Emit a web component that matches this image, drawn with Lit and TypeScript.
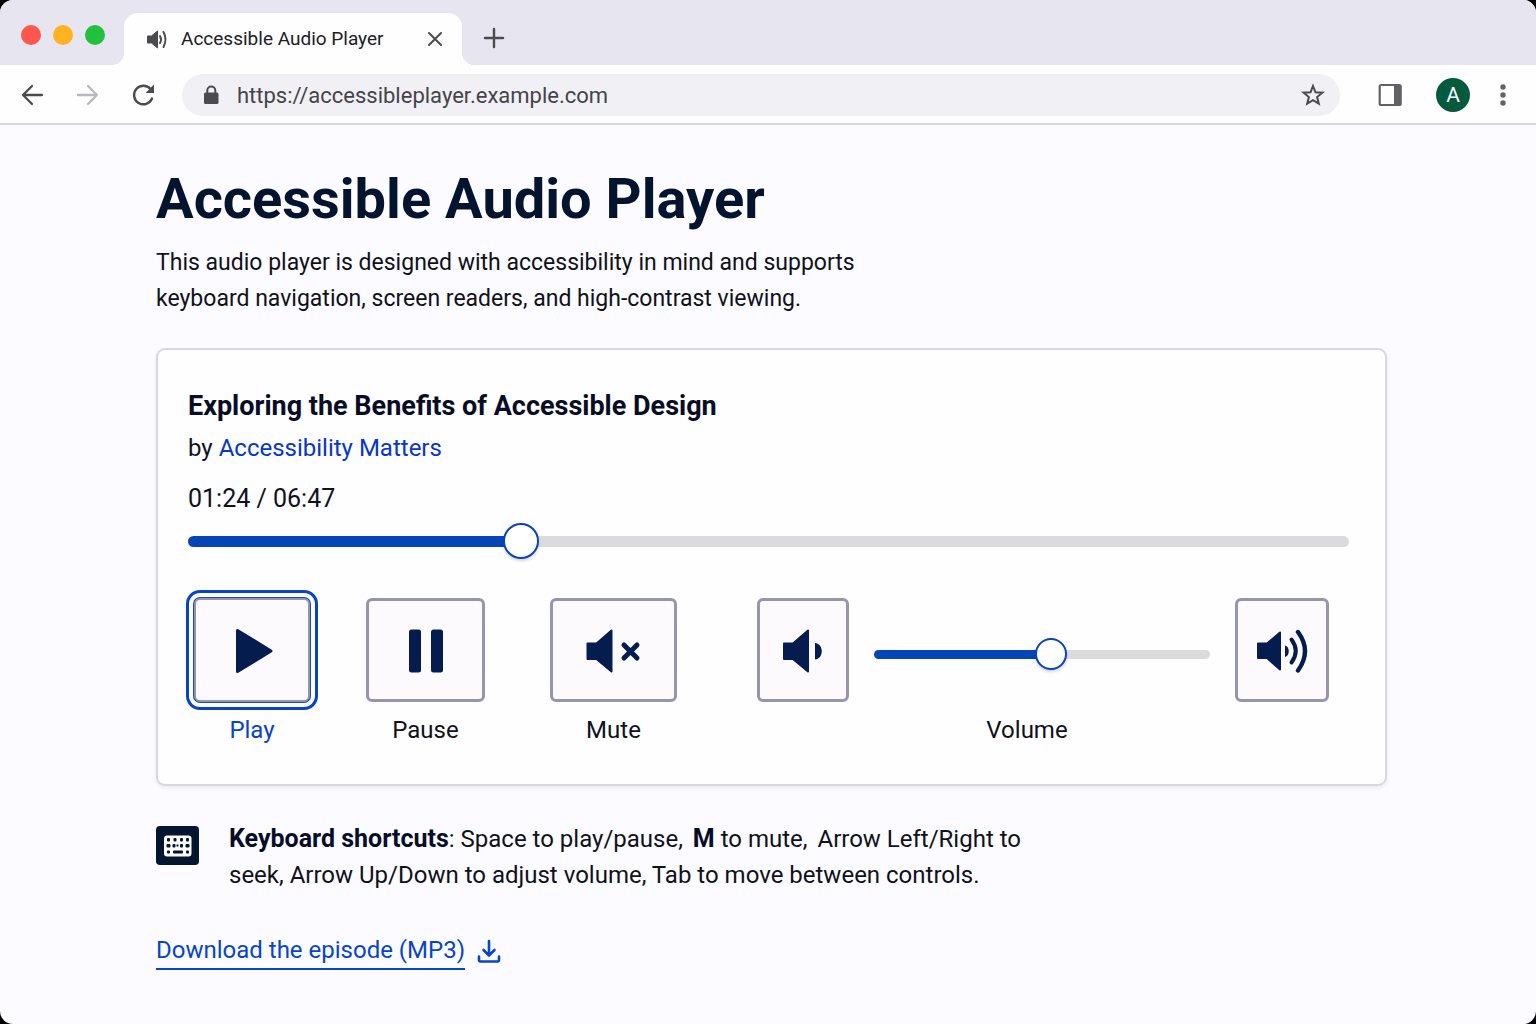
import { LitElement, html, css, svg } from "lit";
import { customElement, state } from "lit/decorators.js";

const speakerTab = svg`<path fill="currentColor" stroke="currentColor" stroke-linejoin="round" d="M1.500 8h4l6-5v17l-6-5h-4z"/><path fill="none" stroke="currentColor" stroke-width="2" stroke-linecap="round" d="M14 8q2 3.500 0 7M17.500 4q4 7.500 0 15"/>`;

@customElement("browser-chrome")
class BrowserChrome extends LitElement {
  static styles = css`
    :host { display: block; font-family: Roboto, "Liberation Sans", sans-serif; color: #4b4a50; }
    button { font: inherit; color: inherit; background: none; border: 0; padding: 0; display: flex; align-items: center; justify-content: center; cursor: pointer; }
    svg { display: block; }
    .strip { display: flex; align-items: flex-end; height: 65px; background: #e7e6f0; padding-left: 21px; }
    .lights { display: flex; align-self: flex-start; gap: 12px; margin-top: 25px; }
    .light { width: 20px; height: 20px; border-radius: 50%; background: #ff564d; }
    .light.min { background: #ffb320; }
    .light.max { background: #21c13f; }
    .tab { position: relative; display: flex; align-items: center; box-sizing: border-box; width: 338px; height: 52px; margin-left: 19px; padding: 0 16px 0 22px; background: #fefdff; border-radius: 14px 14px 0 0; }
    .tab::before, .tab::after { content: ""; position: absolute; bottom: 0; width: 12px; height: 12px; }
    .tab::before { left: -12px; background: radial-gradient(circle at 0 0, transparent 12px, #fefdff 12px); }
    .tab::after { right: -12px; background: radial-gradient(circle at 100% 0, transparent 12px, #fefdff 12px); }
    .title { flex: 1; margin-left: 12px; font-size: 19px; line-height: 24px; color: #202026; white-space: nowrap; }
    .new { width: 36px; height: 36px; margin: 0 0 9px 14px; }
    .bar { display: flex; align-items: center; gap: 20px; box-sizing: border-box; height: 60px; padding: 2px 28px 0 14px; background: #fefdff; border-bottom: 2px solid #d8d7e0; }
    .nav { width: 36px; height: 36px; }
    .nav[disabled] { color: #b9b8bf; }
    .address { flex: 1; display: flex; align-items: center; height: 42px; border-radius: 21px; background: #f1f0f5; padding: 0 14px 0 21px; }
    .address input { flex: 1; min-width: 0; border: 0; background: none; outline: none; margin-left: 17px; padding: 2px 0 0; font: 22px/28px Roboto, "Liberation Sans", sans-serif; color: #45444a; }
    .tools { display: flex; align-items: center; gap: 28px; margin-left: 12px; }
    .avatar { width: 34px; height: 34px; border-radius: 50%; background: #045a3c; color: #fff; font-size: 21px; }
    .dots { width: 10px; height: 36px; }
  `;
  render() {
    return html`
      <div class="strip">
        <div class="lights"><span class="light"></span><span class="light min"></span><span class="light max"></span></div>
        <div class="tab">
          <svg width="23" height="22" viewBox="0 0 23 22" aria-hidden="true">${speakerTab}</svg>
          <span class="title">Accessible Audio Player</span>
          <button aria-label="Close tab"><svg width="22" height="22" viewBox="0 0 22 22"><path stroke="currentColor" stroke-width="2" stroke-linecap="round" d="M5 5l12 12M17 5L5 17"/></svg></button>
        </div>
        <button class="new" aria-label="New tab"><svg width="22" height="22" viewBox="0 0 22 22"><path stroke="currentColor" stroke-width="2.400" stroke-linecap="round" d="M11 2v18M2 11h18"/></svg></button>
      </div>
      <div class="bar">
        <button class="nav" aria-label="Back"><svg width="24" height="24" viewBox="0 0 24 24"><path fill="none" stroke="currentColor" stroke-width="2.300" stroke-linecap="round" stroke-linejoin="round" d="M22 12H3M12 3l-9 9 9 9"/></svg></button>
        <button class="nav" aria-label="Forward" disabled><svg width="24" height="24" viewBox="0 0 24 24"><path fill="none" stroke="currentColor" stroke-width="2.300" stroke-linecap="round" stroke-linejoin="round" d="M2 12h19M12 3l9 9-9 9"/></svg></button>
        <button class="nav" aria-label="Reload"><svg width="24" height="24" viewBox="0 0 24 24"><path fill="none" stroke="currentColor" stroke-width="2.400" stroke-linecap="round" d="M20 15.500A9.300 9.300 0 1 1 18.500 6"/><path fill="currentColor" d="M22 1.500v8.500h-8.500z"/></svg></button>
        <div class="address">
          <svg width="17" height="20" viewBox="0 0 17 20" aria-hidden="true"><rect x="1" y="7.500" width="14.500" height="11.500" rx="1.500" fill="currentColor"/><path fill="none" stroke="currentColor" stroke-width="2" d="M4.300 8V5.500a4 4 0 0 1 8 0V8"/></svg>
          <input aria-label="Address" value="https://accessibleplayer.example.com" />
          <button aria-label="Bookmark"><svg width="26" height="26" viewBox="0 0 26 26"><path fill="none" stroke="currentColor" stroke-width="2" d="M13 4l2.500 6.300 6.900.4-5.300 4.300 1.700 6.700-5.800-3.600-5.800 3.600 1.700-6.700-5.300-4.300 6.900-.4z"/></svg></button>
        </div>
        <div class="tools">
          <button class="nav" aria-label="Side panel"><svg width="24" height="24" viewBox="0 0 24 24"><rect x="1.700" y="2" width="21" height="20" rx="1.500" fill="none" stroke="#626167" stroke-width="2.200"/><path fill="#626167" d="M16 2h6v20h-6z"/></svg></button>
          <button class="avatar" aria-label="Profile">A</button>
          <button class="dots" aria-label="Menu"><svg width="6" height="24" viewBox="0 0 6 24" fill="#626167"><circle cx="3" cy="4" r="2.700"/><circle cx="3" cy="12" r="2.700"/><circle cx="3" cy="20" r="2.700"/></svg></button>
        </div>
      </div>`;
  }
}

const icons = {
  play: svg`<path fill="currentColor" stroke="currentColor" stroke-width="3" stroke-linejoin="round" d="M15.500 10.500v41L49 31z"/>`,
  pause: svg`<rect x="13" y="9.500" width="12" height="43" rx="2.500" fill="currentColor"/><rect x="35" y="9.500" width="12" height="43" rx="2.500" fill="currentColor"/>`,
  mute: svg`<path fill="currentColor" stroke="currentColor" stroke-width="2" stroke-linejoin="round" d="M3.500 23.500h9L27.500 10.500v41L12.500 39h-9z"/><path stroke="currentColor" stroke-width="5" stroke-linecap="round" d="M40 25l13 13M53 25L40 38"/>`,
  low: svg`<path fill="currentColor" stroke="currentColor" stroke-width="2" stroke-linejoin="round" d="M11 23.500h9L35 10.500v41L20 39h-9z"/><path fill="currentColor" d="M42 23c9 1 9 15.500 0 16.500z"/>`,
  high: svg`<path fill="currentColor" stroke="currentColor" stroke-width="2" stroke-linejoin="round" d="M6 23.500h9L28 12.500v37L15 38H6z"/><path fill="currentColor" d="M33 25.500c5 1 5 10.500 0 11.500z"/><g fill="none" stroke="currentColor" stroke-linecap="round"><path stroke-width="4" d="M39.500 19.500q8.500 11.500 0 23"/><path stroke-width="4.400" d="M46 12q14 19 0 38.500"/></g>`,
};

@customElement("audio-player")
class AudioPlayer extends LitElement {
  @state() private position = 28;
  @state() private volume = 53;

  static styles = css`
    :host { display: block; }
    .card { border: 2px solid #d9d8df; border-radius: 9px; background: #fefdff; padding: 38px 36px 36px 30px; box-shadow: 0 2px 4px rgba(20, 20, 50, 0.08); }
    h2 { margin: 0; font-size: 27px; line-height: 36px; font-weight: 700; color: #080c25; }
    .by { margin: 6px 0 0; font-size: 24px; line-height: 36px; }
    a { color: #0737c4; text-decoration: none; }
    .time { margin: 15px 0 0; font-size: 25px; line-height: 36px; }
    .range { -webkit-appearance: none; appearance: none; display: block; box-sizing: border-box; width: 100%; height: 36px; margin: 0; background: none; cursor: pointer; --thumb: 36px; --track: 11px; }
    .range.seek { margin-top: 6px; }
    .range::-webkit-slider-runnable-track { height: var(--track); border-radius: 6px; background: linear-gradient(to right, #0545b5 var(--fill), #dbdadd var(--fill)); }
    .range::-webkit-slider-thumb { -webkit-appearance: none; box-sizing: border-box; width: var(--thumb); height: var(--thumb); margin-top: calc((var(--track) - var(--thumb)) / 2); border: 2px solid #0a43bb; border-radius: 50%; background: #fff; box-shadow: 0 2px 3px rgba(0, 0, 0, 0.16); }
    .range.level { --thumb: 32px; --track: 9px; }
    .controls { display: grid; grid-template-columns: 172px 184px 207px 1fr; align-items: start; margin: 39px 20px 0 6px; }
    .item { display: flex; flex-direction: column; align-items: center; justify-self: start; gap: 10px; }
    .caption { font-size: 24px; line-height: 36px; text-align: center; }
    .item.active .caption { color: #0744c8; }
    .key { display: flex; align-items: center; justify-content: center; box-sizing: border-box; flex: none; height: 104px; padding: 0; border: 3px solid #9695ad; border-radius: 6px; background: #fcfafd; color: #041d4e; cursor: pointer; }
    .key svg { display: block; }
    .play { width: 116px; border-width: 2px; box-shadow: 0 0 0 1px #174bb0; outline: 3px solid #0744c0; outline-offset: 5px; }
    .pause { width: 119px; }
    .mute { width: 127px; }
    .quieter { width: 92px; }
    .louder { width: 94px; }
    .volume { display: flex; align-items: flex-start; gap: 25px; }
    .slider { flex: 1; min-width: 0; display: flex; flex-direction: column; gap: 40px; padding-top: 38px; }
    .slider .caption { padding-right: 30px; }
  `;

  private move(e: Event) { this.position = Number((e.target as HTMLInputElement).value); }
  private level(e: Event) { this.volume = Number((e.target as HTMLInputElement).value); }
  private icon(name: keyof typeof icons) {
    return html`<svg width="60" height="60" viewBox="0 0 60 60" aria-hidden="true">${icons[name]}</svg>`;
  }

  render() {
    return html`
      <section class="card">
        <h2>Exploring the Benefits of Accessible Design</h2>
        <p class="by">by <a href="#publisher">Accessibility Matters</a></p>
        <p class="time">01:24 / 06:47</p>
        <input class="range seek" type="range" aria-label="Seek" min="0" max="100" .value=${String(this.position)} style="--fill:${this.position}%" @input=${this.move} />
        <div class="controls">
          <div class="item active"><button class="key play" aria-labelledby="play">${this.icon("play")}</button><span class="caption" id="play">Play</span></div>
          <div class="item"><button class="key pause" aria-labelledby="pause">${this.icon("pause")}</button><span class="caption" id="pause">Pause</span></div>
          <div class="item"><button class="key mute" aria-labelledby="mute">${this.icon("mute")}</button><span class="caption" id="mute">Mute</span></div>
          <div class="volume">
            <button class="key quieter" aria-label="Volume down">${this.icon("low")}</button>
            <div class="slider">
              <input class="range level" id="volume" type="range" min="0" max="100" .value=${String(this.volume)} style="--fill:${this.volume}%" @input=${this.level} />
              <label class="caption" for="volume">Volume</label>
            </div>
            <button class="key louder" aria-label="Volume up">${this.icon("high")}</button>
          </div>
        </div>
      </section>`;
  }
}

@customElement("app-root")
class AppRoot extends LitElement {
  static styles = css`
    :host { display: block; background: #000; font-family: Roboto, "Liberation Sans", sans-serif; color: #10111c; }
    .window { min-height: 100vh; border-radius: 13px; overflow: hidden; background: #fcfbff; }
    main { padding: 40px 149px 48px 156px; }
    h1 { margin: 0; font-size: 56px; line-height: 68px; font-weight: 700; color: #04142f; }
    .intro { margin: 12px 0 31px; font-size: 23px; line-height: 36px; }
    .hints { display: flex; align-items: flex-start; gap: 30px; margin-top: 35px; }
    .hints svg { display: block; flex: none; margin-top: 5px; }
    .hints p { margin: 0; font-size: 24px; line-height: 36px; }
    .hints strong { color: #060d29; font-size: 25px; }
    .combo { margin-left: 4px; }
    .download { display: inline-flex; align-items: center; gap: 12px; margin-top: 39px; font-size: 24px; line-height: 36px; color: #0745c8; text-decoration: none; }
    .download span { border-bottom: 2px solid #0745c8; }
  `;
  render() {
    return html`
      <div class="window">
        <browser-chrome></browser-chrome>
        <main>
          <h1>Accessible Audio Player</h1>
          <p class="intro">This audio player is designed with accessibility in mind and supports<br />keyboard navigation, screen readers, and high-contrast viewing.</p>
          <audio-player></audio-player>
          <div class="hints">
            <svg width="43" height="39" viewBox="0 0 43 39" aria-hidden="true">
              <rect width="43" height="39" rx="4" fill="#03152f"/>
              <rect x="8" y="9.500" width="27.500" height="21" rx="3" fill="#fff"/>
              <g fill="#03152f">
                <rect x="11" y="12" width="3" height="3.500" rx="1"/><rect x="17.500" y="12" width="3" height="3.500" rx="1"/><rect x="24" y="12" width="3" height="3.500" rx="1"/><rect x="30" y="12" width="3" height="3.500" rx="1"/>
                <rect x="10.500" y="18" width="4" height="3.500" rx="1"/><rect x="16.500" y="18" width="3" height="3.500" rx="1"/><rect x="20.500" y="18.500" width="2" height="2"/><rect x="24" y="18" width="3" height="3.500" rx="1"/><rect x="29.500" y="18" width="4" height="3.500" rx="1"/>
                <rect x="11" y="24.500" width="3" height="3" rx="1"/><rect x="17" y="24.500" width="10" height="3" rx="1"/><rect x="30" y="24.500" width="3" height="3" rx="1"/>
              </g>
            </svg>
            <p><strong>Keyboard shortcuts</strong>: Space to play/pause, <span class="combo"><strong>M</strong> to mute,</span> <span class="combo">Arrow Left/Right to</span><br />seek, Arrow Up/Down to adjust volume, Tab to move between controls.</p>
          </div>
          <a class="download" href="#episode"><span>Download the episode (MP3)</span>
            <svg width="24" height="24" viewBox="0 0 24 24" fill="none" stroke="currentColor" stroke-width="2.600" stroke-linecap="round" stroke-linejoin="round" aria-hidden="true"><path d="M12 2v14M6.500 11l5.500 5.500 5.500-5.500M2 17.500V21q0 1.500 1.500 1.500h17q1.500 0 1.500-1.500v-3.500"/></svg>
          </a>
        </main>
      </div>`;
  }
}
